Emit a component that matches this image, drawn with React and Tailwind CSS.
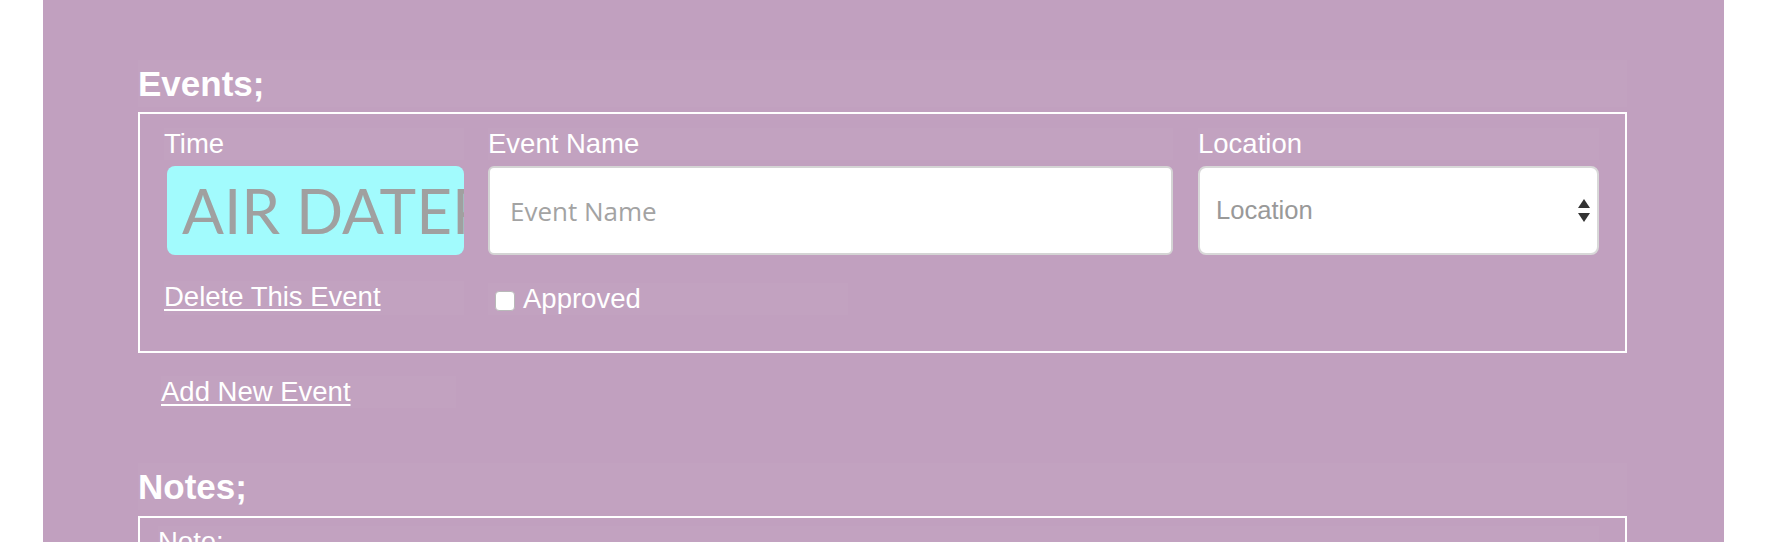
import { useState } from 'react'

const labelCls = 'block text-[27.5px] leading-[32px] text-white bg-white/[0.025]'

function Arrows() {
	return (
		<svg width="12" height="23" viewBox="0 0 12 23" className="shrink-0">
			<polygon points="6,0 12,9 0,9" fill="#333" />
			<polygon points="0,14 12,14 6,23" fill="#333" />
		</svg>
	)
}

export default function App() {
	const [eventName, setEventName] = useState('')
	const [location, setLocation] = useState('')
	const [approved, setApproved] = useState(false)

	return (
		<div
			className="h-[542px] overflow-hidden bg-white"
			style={{ fontFamily: '"Liberation Sans", Arial, sans-serif' }}
		>
			<div className="ml-[43px] w-[1681px] h-full bg-[#c1a0bf] pl-[95px] pr-[97px] pt-[60px]">
				{/* Events */}
				<h3 className="h-[47px] text-[35px] leading-[47px] font-bold text-white bg-white/[0.025]">
					Events;
				</h3>
				<div className="mt-[5px] border-2 border-white pl-[24px] pr-[26px] pt-[14px] pb-[36px]">
					<div className="flex">
						{/* Time */}
						<div className="w-[300px]">
							<label className={labelCls}>Time</label>
							<div
								className="mt-[6px] ml-[3px] w-[297px] h-[89px] rounded-[8px] bg-[#a2fbfd] overflow-hidden whitespace-nowrap pl-[15px] text-[62px] leading-[89px] text-[#a0a0a0]"
								style={{ fontFamily: 'Lato, "Open Sans", sans-serif' }}
							>
								AIR DATEPICKER
							</div>
						</div>

						{/* Event Name */}
						<div className="ml-[24px] w-[685px]">
							<label className={labelCls}>Event Name</label>
							<input
								type="text"
								value={eventName}
								onChange={e => setEventName(e.target.value)}
								placeholder="Event Name"
								className="mt-[6px] w-full h-[89px] rounded-[6px] border-2 border-[#d4d4d4] bg-white px-[20px] text-[26px] text-[#555] placeholder:text-[#a3a3a3] outline-none"
								style={{ fontFamily: '"Open Sans", sans-serif' }}
							/>
						</div>

						{/* Location */}
						<div className="ml-[25px] w-[401px]">
							<label className={labelCls}>Location</label>
							<div className="relative mt-[6px]">
								<select
									value={location}
									onChange={e => setLocation(e.target.value)}
									className="w-full h-[89px] appearance-none rounded-[8px] border-2 border-[#d8d8d8] bg-white pl-[16px] pr-[30px] text-[25.6px] text-[#999] outline-none"
								>
									<option value="">Location</option>
									<option value="studio-a">Studio A</option>
									<option value="studio-b">Studio B</option>
								</select>
								<div className="pointer-events-none absolute right-[9px] top-[33px]">
									<Arrows />
								</div>
							</div>
						</div>
					</div>

					{/* Row actions */}
					<div className="flex mt-[26px]">
						<div className="w-[300px] bg-white/[0.025]">
							<a href="#" className="text-[27.5px] leading-[32px] text-white underline underline-offset-[3px] decoration-2">
								Delete This Event
							</a>
						</div>
						<div className="ml-[24px] w-[360px] bg-white/[0.025] mt-[2px]">
							<label className="flex items-center pl-[7px] text-[27.5px] leading-[32px] text-white">
								<input
									type="checkbox"
									checked={approved}
									onChange={e => setApproved(e.target.checked)}
									className="appearance-none w-[20px] h-[20px] rounded-[4px] border border-[#b9b9b9] bg-white mr-[8px] mt-[4px] checked:bg-blue-500"
								/>
								Approved
							</label>
						</div>
					</div>
				</div>

				<div className="mt-[23px] ml-[23px] w-[295px] bg-white/[0.025]">
					<a href="#" className="text-[27.5px] leading-[32px] text-white underline underline-offset-[3px] decoration-2">
						Add New Event
					</a>
				</div>

				{/* Notes */}
				<h3 className="mt-[55px] h-[47px] text-[35px] leading-[47px] font-bold text-white bg-white/[0.025]">
					Notes;
				</h3>
				<div className="mt-[6px] border-2 border-white pl-[18px] pr-[26px] pt-[8px] pb-[30px]">
					<label className={labelCls}>Note:</label>
					<textarea className="mt-[6px] w-full h-[120px] rounded-[6px] border-2 border-[#d4d4d4] bg-white" />
				</div>
			</div>
		</div>
	)
}
